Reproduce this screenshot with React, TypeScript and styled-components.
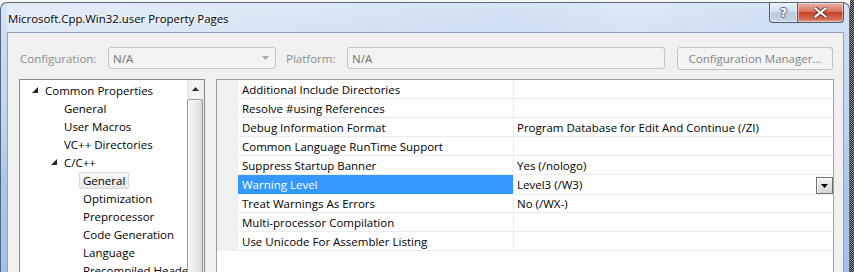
import React from "react";
import styled, { createGlobalStyle } from "styled-components";

const FONT = `"Open Sans", "Noto Sans", "Liberation Sans", sans-serif`;

const GlobalStyle = createGlobalStyle`
  html, body { margin: 0; padding: 0; background: #ffffff; overflow: hidden; }
  #root { width: 854px; height: 272px; }
`;

const Screen = styled.div`
  width: 854px;
  height: 272px;
  display: flex;
  overflow: hidden;
  font-family: ${FONT};
  font-size: 11.5px;
`;

const WindowColumn = styled.div`
  width: 850px;
  display: flex;
  flex-direction: column;
  background: #f6f7f5;
`;

const Backdrop = styled.div`
  height: 2px;
  flex-shrink: 0;
`;

const Dots = styled.div`
  width: 4px;
  height: 272px;
  flex-shrink: 0;
  background: repeating-conic-gradient(#2b2b2b 0 25%, #8c8c8c 0 50%) 0 0 / 2px 2px;
`;

const Window = styled.div`
  flex: 1;
  min-height: 0;
  display: flex;
  flex-direction: column;
  border: 1px solid #56687e;
  border-bottom: none;
  border-radius: 7px 7px 0 0;
  padding: 0 5px 0 6px;
  background: linear-gradient(180deg, #d5e4f5 0px, #cadcf1 40px, #bdd5ef 120px, #a8c8ec 180px, #a0c3ea 270px);
`;

const TitleBar = styled.div`
  height: 29px;
  flex-shrink: 0;
  display: flex;
  align-items: flex-start;
  background: linear-gradient(100deg, rgba(255,255,255,0.35) 0%, rgba(255,255,255,0.15) 40%, rgba(255,255,255,0) 60%, rgba(255,255,255,0.2) 75%, rgba(255,255,255,0) 90%);
`;

const TitleText = styled.div`
  margin: 8px 0 0 1px;
  font-size: 11.4px;
  line-height: 16px;
  color: #000;
  text-shadow: 0 0 6px rgba(255,255,255,0.95), 0 0 3px rgba(255,255,255,0.9);
  white-space: nowrap;
`;

const CaptionGroup = styled.div`
  margin-left: auto;
  display: flex;
  height: 20px;
`;

const CaptionButton = styled.div<{ $kind: "help" | "close" }>`
  width: ${(p) => (p.$kind === "help" ? "28px" : "47px")};
  height: 20px;
  box-sizing: border-box;
  border: 1px solid #4a5a70;
  border-top: none;
  ${(p) => (p.$kind === "help" ? "border-right: none;" : "")}
  border-radius: ${(p) => (p.$kind === "help" ? "0 0 0 4px" : "0 0 4px 0")};
  display: flex;
  align-items: center;
  justify-content: center;
  box-shadow: inset 0 0 0 1px rgba(255,255,255,0.45);
  background: ${(p) =>
    p.$kind === "help"
      ? "linear-gradient(180deg, #e9f0f8 0%, #d3e0ee 45%, #b9cbe0 50%, #c6d6e9 100%)"
      : "linear-gradient(180deg, #eab1a4 0%, #d9735e 45%, #c64326 50%, #d46a50 85%, #e39c84 100%)"};
`;

const HelpGlyph = styled.span`
  font-family: "DejaVu Sans", sans-serif;
  font-weight: bold;
  font-size: 13px;
  line-height: 13px;
  color: #ffffff;
  text-shadow: -1px 0 #5b6b80, 1px 0 #5b6b80, 0 -1px #5b6b80, 0 1px #5b6b80;
`;

const Client = styled.div`
  flex: 1;
  min-height: 0;
  background: #f0f0f0;
  border: 1px solid #8ea3bc;
  border-bottom: none;
  display: flex;
  flex-direction: column;
  padding: 14px 9px 0 11px;
  gap: 10px;
  overflow: hidden;
`;

const ConfigRow = styled.div`
  display: flex;
  align-items: center;
  height: 22px;
  flex-shrink: 0;
  padding-left: 1px;
`;

const FieldLabel = styled.div<{ $w: number; $ml?: number }>`
  width: ${(p) => p.$w}px;
  margin-left: ${(p) => p.$ml ?? 0}px;
  color: #8d8d8d;
  white-space: nowrap;
`;

const Combo = styled.div<{ $w: number }>`
  width: ${(p) => p.$w}px;
  height: 22px;
  box-sizing: border-box;
  border: 1px solid #c3c3c3;
  border-radius: 3px;
  background: #f3f3f3;
  display: flex;
  align-items: center;
  padding: 0 6px 0 4px;
  color: #6f6f6f;
`;

const ComboText = styled.span`
  flex: 1;
`;

const CmdButton = styled.div`
  width: 156px;
  height: 23px;
  box-sizing: border-box;
  margin-left: 12px;
  border: 1px solid #c0c0c0;
  border-radius: 3px;
  background: #f4f4f4;
  color: #838383;
  display: flex;
  align-items: center;
  justify-content: center;
  white-space: nowrap;
`;

const Panels = styled.div`
  display: flex;
  gap: 11px;
  height: 220px;
  flex-shrink: 0;
`;

const TreeBox = styled.div`
  width: 186px;
  box-sizing: border-box;
  border: 1px solid #828790;
  background: #fff;
  display: flex;
`;

const TreeList = styled.div`
  flex: 1;
  min-width: 0;
  overflow: hidden;
  padding-top: 1px;
`;

const TreeRow = styled.div<{ $level: number }>`
  height: 18px;
  display: flex;
  align-items: center;
  padding-left: ${(p) => 12 + p.$level * 19}px;
  white-space: nowrap;
  color: #000;
`;

const Expander = styled.span`
  width: 13px;
  flex-shrink: 0;
  display: flex;
  align-items: center;
`;

const TreeLabel = styled.span<{ $selected?: boolean }>`
  height: 17px;
  line-height: 15px;
  box-sizing: border-box;
  margin-left: -4px;
  margin-top: 1px;
  padding: 0 3px;
  border: 1px solid ${(p) => (p.$selected ? "#d9d9d9" : "transparent")};
  border-radius: 2px;
  background: ${(p) => (p.$selected ? "linear-gradient(180deg, #fafafa, #e8e8e8)" : "transparent")};
`;

const Scrollbar = styled.div`
  width: 17px;
  flex-shrink: 0;
  background: linear-gradient(90deg, #e8e8e8, #f4f4f4 30%, #f4f4f4 70%, #ececec);
  display: flex;
  flex-direction: column;
`;

const ScrollArrow = styled.div`
  height: 17px;
  display: flex;
  align-items: center;
  justify-content: center;
`;

const ScrollThumb = styled.div`
  margin: 2px 1px 0 0;
  flex: 1;
  border: 1px solid #979797;
  border-bottom: none;
  border-radius: 3px 3px 0 0;
  background: linear-gradient(90deg, #f6f6f6 0%, #ececec 45%, #dcdcdc 100%);
  box-shadow: inset 1px 1px 0 #ffffff;
`;

const GridBox = styled.div`
  flex: 1;
  box-sizing: border-box;
  border: 1px solid #a0a0a0;
  background: #fff;
`;

const GridRow = styled.div`
  display: grid;
  grid-template-columns: 21px 276px 1fr;
  height: 19px;
`;

const Strip = styled.div`
  background: #f0f0f0;
`;

const NameCell = styled.div<{ $selected?: boolean }>`
  border-right: 1px solid #ececec;
  border-bottom: 1px solid #ececec;
  padding-left: 4px;
  display: flex;
  align-items: center;
  white-space: nowrap;
  background: ${(p) => (p.$selected ? "#3399ff" : "#fff")};
  color: ${(p) => (p.$selected ? "#fff" : "#000")};
`;

const ValueCell = styled.div`
  border-bottom: 1px solid #ececec;
  padding-left: 3px;
  display: flex;
  align-items: center;
  white-space: nowrap;
  color: #000;
`;

const ValueText = styled.span`
  flex: 1;
`;

const DropButton = styled.div`
  width: 17px;
  height: 17px;
  box-sizing: border-box;
  margin-top: 2px;
  border: 1px solid #707070;
  background: linear-gradient(180deg, #f2f2f2, #e2e2e2 50%, #d6d6d6);
  box-shadow: inset 1px 1px 0 #fff;
  display: flex;
  align-items: center;
  justify-content: center;
`;

const Tri = ({ dir, color, w = 7, h = 4 }: { dir: "up" | "down"; color: string; w?: number; h?: number }) => (
  <svg width={w} height={h} viewBox={`0 0 ${w} ${h}`}>
    {dir === "down" ? (
      <polygon points={`0,0 ${w},0 ${w / 2},${h}`} fill={color} />
    ) : (
      <polygon points={`0,${h} ${w},${h} ${w / 2},0`} fill={color} />
    )}
  </svg>
);

const ExpandGlyph = () => (
  <svg width="6" height="6" viewBox="0 0 6 6">
    <polygon points="6,0 6,6 0,6" fill="#262626" />
  </svg>
);

const CloseGlyph = () => (
  <svg width="13" height="11" viewBox="0 0 13 11">
    <path d="M1.5 1.5 L11.5 9.5 M11.5 1.5 L1.5 9.5" stroke="#5b3a36" strokeWidth="4" strokeLinecap="square" />
    <path d="M1.5 1.5 L11.5 9.5 M11.5 1.5 L1.5 9.5" stroke="#ffffff" strokeWidth="2" strokeLinecap="square" />
  </svg>
);

type TreeItem = { label: string; level: number; expanded?: boolean; selected?: boolean };

const tree: TreeItem[] = [
  { label: "Common Properties", level: 0, expanded: true },
  { label: "General", level: 1 },
  { label: "User Macros", level: 1 },
  { label: "VC++ Directories", level: 1 },
  { label: "C/C++", level: 1, expanded: true },
  { label: "General", level: 2, selected: true },
  { label: "Optimization", level: 2 },
  { label: "Preprocessor", level: 2 },
  { label: "Code Generation", level: 2 },
  { label: "Language", level: 2 },
  { label: "Precompiled Headers", level: 2 },
];

type Prop = { name: string; value: string; selected?: boolean };

const props: Prop[] = [
  { name: "Additional Include Directories", value: "" },
  { name: "Resolve #using References", value: "" },
  { name: "Debug Information Format", value: "Program Database for Edit And Continue (/ZI)" },
  { name: "Common Language RunTime Support", value: "" },
  { name: "Suppress Startup Banner", value: "Yes (/nologo)" },
  { name: "Warning Level", value: "Level3 (/W3)", selected: true },
  { name: "Treat Warnings As Errors", value: "No (/WX-)" },
  { name: "Multi-processor Compilation", value: "" },
  { name: "Use Unicode For Assembler Listing", value: "" },
];

export default function App() {
  return (
    <>
      <GlobalStyle />
      <Screen>
        <WindowColumn>
          <Backdrop />
          <Window>
            <TitleBar>
              <TitleText>Microsoft.Cpp.Win32.user Property Pages</TitleText>
              <CaptionGroup>
                <CaptionButton $kind="help">
                  <HelpGlyph>?</HelpGlyph>
                </CaptionButton>
                <CaptionButton $kind="close">
                  <CloseGlyph />
                </CaptionButton>
              </CaptionGroup>
            </TitleBar>
            <Client>
              <ConfigRow>
                <FieldLabel $w={88}>Configuration:</FieldLabel>
                <Combo $w={168}>
                  <ComboText>N/A</ComboText>
                  <Tri dir="down" color="#a8a8a8" />
                </Combo>
                <FieldLabel $w={61} $ml={10}>Platform:</FieldLabel>
                <Combo $w={318}>
                  <ComboText>N/A</ComboText>
                </Combo>
                <CmdButton>Configuration Manager...</CmdButton>
              </ConfigRow>
              <Panels>
                <TreeBox>
                  <TreeList>
                    {tree.map((t, i) => (
                      <TreeRow key={i} $level={t.level}>
                        <Expander>{t.expanded ? <ExpandGlyph /> : null}</Expander>
                        <TreeLabel $selected={t.selected}>{t.label}</TreeLabel>
                      </TreeRow>
                    ))}
                  </TreeList>
                  <Scrollbar>
                    <ScrollArrow>
                      <Tri dir="up" color="#2a2a2a" />
                    </ScrollArrow>
                    <ScrollThumb />
                  </Scrollbar>
                </TreeBox>
                <GridBox>
                  {props.map((p, i) => (
                    <GridRow key={i}>
                      <Strip />
                      <NameCell $selected={p.selected}>{p.name}</NameCell>
                      <ValueCell>
                        <ValueText>{p.value}</ValueText>
                        {p.selected ? (
                          <DropButton>
                            <Tri dir="down" color="#000" />
                          </DropButton>
                        ) : null}
                      </ValueCell>
                    </GridRow>
                  ))}
                </GridBox>
              </Panels>
            </Client>
          </Window>
        </WindowColumn>
        <Dots />
      </Screen>
    </>
  );
}
